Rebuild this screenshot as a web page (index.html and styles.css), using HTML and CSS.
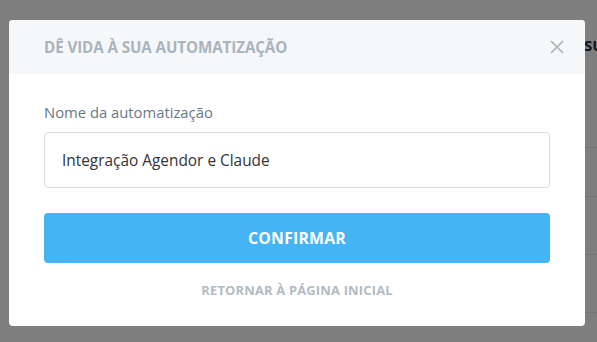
FILE: index.html
```html
<!DOCTYPE html>
<html lang="pt-BR">
<head>
<meta charset="utf-8">
<title>Automatização</title>
<link rel="stylesheet" href="styles.css">
</head>
<body>
<div class="page">
  <div class="page-head"><span class="page-title">SUAS</span></div>
  <div class="page-row first"></div>
  <div class="page-row"></div>
  <div class="page-row"></div>
  <div class="page-row"></div>
</div>
<div class="overlay"></div>
<div class="modal">
  <div class="modal-header">
    <h2 class="modal-title">DÊ VIDA À SUA AUTOMATIZAÇÃO</h2>
    <button class="close" aria-label="Fechar">
      <svg width="14" height="14" viewBox="0 0 14 14"><path d="M1 1L13 13M13 1L1 13" stroke="#a9b3bc" stroke-width="1.6" fill="none"/></svg>
    </button>
  </div>
  <div class="modal-body">
    <label class="label">Nome da automatização</label>
    <div class="input">Integração Agendor e Claude</div>
    <button class="confirm">CONFIRMAR</button>
    <a class="back">RETORNAR À PÁGINA INICIAL</a>
  </div>
</div>
</body>
</html>
```
FILE: styles.css
```css
html, body { margin: 0; padding: 0; }
body {
  width: 597px; height: 342px; overflow: hidden;
  font-family: "Open Sans", "Liberation Sans", sans-serif;
  background: #fff;
  position: relative;
}
.page { padding-left: 584px; height: 342px; overflow: hidden; box-sizing: border-box; }
.page-head { height: 112px; }
.page-title { display: block; margin-top: 35px; font-size: 15px; font-weight: 700; color: #1c2b3f; line-height: 20px; white-space: nowrap; overflow: hidden; width: 13px; }
.page-row { height: 57px; border-top: 1px solid #e6e6e6; }
.page-row.first { height: 48px; }
.overlay { position: absolute; inset: 0; background: rgba(0,0,0,0.5); }
.modal {
  position: absolute; left: 9px; top: 20px; width: 576px; height: 306px;
  background: #fff; border-radius: 4px; overflow: hidden;
}
.modal-header {
  height: 54px; background: #f5f7f9;
  display: flex; align-items: center; justify-content: space-between;
  padding: 0 21px 0 35px;
}
.modal-title { margin: 0; font-size: 15.2px; font-weight: 700; color: #aab4bd; letter-spacing: -0.1px; }
.close { border: 0; background: none; padding: 0; width: 14px; height: 14px; display: flex; }
.modal-body { padding: 28px 35px 0; display: flex; flex-direction: column; }
.label { font-size: 14.8px; color: #6a7886; line-height: 20px; }
.input {
  margin-top: 10px; height: 54px; border: 1px solid #dcdcdc; border-radius: 4px;
  display: flex; align-items: center; padding-left: 17px;
  font-size: 15.4px; color: #333;
}
.confirm {
  margin-top: 25px; height: 50px; border: 0; border-radius: 4px;
  background: #44b4f5; color: #fff; font-family: inherit;
  font-size: 15.8px; font-weight: 700; letter-spacing: 0.2px;
}
.back {
  margin-top: 19px; text-align: center; font-size: 12.9px; font-weight: 700;
  color: #b1bbc3; line-height: 16px; letter-spacing: 0.2px;
}
```
